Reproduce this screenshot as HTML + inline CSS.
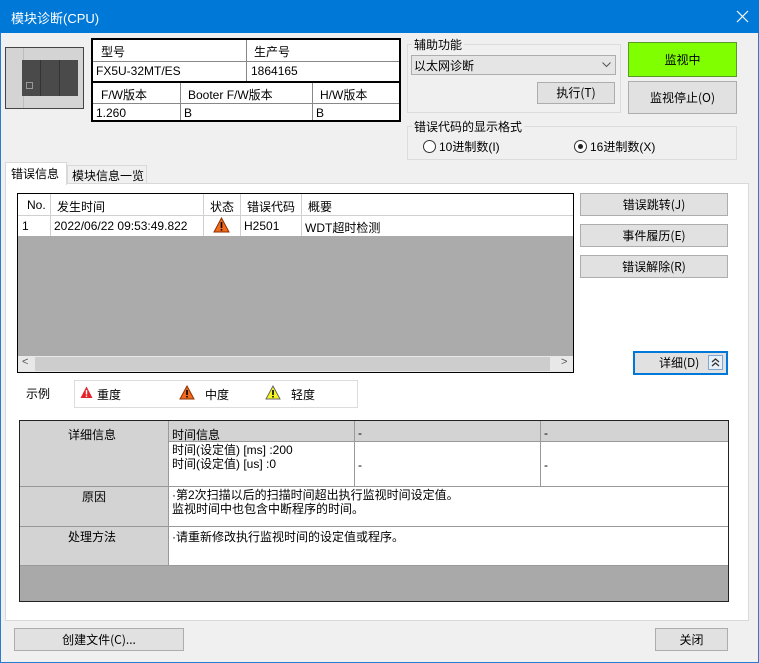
<!DOCTYPE html>
<html><head><meta charset="utf-8"><style>
*{box-sizing:border-box;margin:0;padding:0}
body{width:759px;height:663px;background:#f0f0f0;font-family:"Liberation Sans","Noto Sans CJK SC",sans-serif;font-size:12px;color:#000;position:relative;overflow:hidden}
.a{position:absolute}
.btn{position:absolute;background:#e1e1e1;border:1px solid #adadad;text-align:center;font-family:"Noto Sans CJK SC",sans-serif;font-size:12px}
.t{position:absolute;white-space:nowrap}
.vl{position:absolute;width:1px;background:#a0a0a0}
.hl{position:absolute;height:1px;background:#a0a0a0}
</style></head><body>
<div class="a" style="left:0;top:0;width:759px;height:663px;border:1px solid #2b7bd0"></div>
<div class="a" style="left:0;top:0;width:759px;height:33px;background:#0078d7"></div>
<div class="t" style="left:11px;top:8px;color:#fff;font-size:13px">模块诊断(CPU)</div>
<svg class="a" style="left:736px;top:10px" width="13" height="13"><path d="M1 1L12 12M12 1L1 12" stroke="#fff" stroke-width="1.2"/></svg>

<!-- image -->
<div class="a" style="left:5px;top:47px;width:79px;height:62px;background:#d4d4d4;border:1px solid #444"></div>
<div class="a" style="left:23px;top:48px;width:1px;height:60px;background:#bdbdbd"></div>
<div class="a" style="left:22px;top:60px;width:56px;height:36px;background:#4a4a4a"></div>
<div class="a" style="left:40px;top:60px;width:1px;height:36px;background:#333"></div>
<div class="a" style="left:59px;top:60px;width:1px;height:36px;background:#333"></div>
<div class="a" style="left:26px;top:82px;width:7px;height:7px;border:1px solid #999"></div>

<!-- info table -->
<div class="a" style="left:91px;top:38px;width:310px;height:84px;background:#fff;border:2px solid #000"></div>
<div class="a" style="left:91px;top:81px;width:310px;height:2px;background:#000"></div>
<div class="hl" style="left:93px;top:61px;width:306px;background:#888"></div>
<div class="hl" style="left:93px;top:103px;width:306px;background:#888"></div>
<div class="vl" style="left:246px;top:40px;height:41px;background:#888"></div>
<div class="vl" style="left:180px;top:83px;height:37px;background:#888"></div>
<div class="vl" style="left:312px;top:83px;height:37px;background:#888"></div>
<div class="t" style="left:101px;top:43px">型号</div>
<div class="t" style="left:254px;top:43px">生产号</div>
<div class="t" style="left:96px;top:64px">FX5U-32MT/ES</div>
<div class="t" style="left:251px;top:64px">1864165</div>
<div class="t" style="left:101px;top:86px">F/W版本</div>
<div class="t" style="left:188px;top:86px">Booter F/W版本</div>
<div class="t" style="left:320px;top:86px">H/W版本</div>
<div class="t" style="left:96px;top:106px">1.260</div>
<div class="t" style="left:184px;top:106px">B</div>
<div class="t" style="left:316px;top:106px">B</div>

<!-- aux -->
<div class="a" style="left:407px;top:44px;width:214px;height:69px;border:1px solid #dcdcdc"></div>
<div class="t" style="left:412px;top:36px;background:#f0f0f0;padding:0 2px">辅助功能</div>
<div class="a" style="left:411px;top:55px;width:205px;height:20px;background:#e5e5e5;border:1px solid #adadad"></div>
<div class="t" style="left:414px;top:57px">以太网诊断</div>
<svg class="a" style="left:602px;top:62px" width="9" height="6"><path d="M0.5 0.5L4.5 4.5L8.5 0.5" stroke="#555" fill="none"/></svg>
<div class="btn" style="left:537px;top:82px;width:78px;height:22px;line-height:20px">执行(T)</div>
<div class="btn" style="left:628px;top:42px;width:109px;height:35px;line-height:33px;background:#80ff00;border-color:#5a9a2a">监视中</div>
<div class="btn" style="left:628px;top:81px;width:109px;height:33px;line-height:31px">监视停止(O)</div>

<div class="a" style="left:407px;top:126px;width:330px;height:34px;border:1px solid #dcdcdc"></div>
<div class="t" style="left:412px;top:118px;background:#f0f0f0;padding:0 2px">错误代码的显示格式</div>
<div class="a" style="left:423px;top:140px;width:13px;height:13px;border:1px solid #333;border-radius:50%;background:#fff"></div>
<div class="t" style="left:439px;top:138px">10进制数(I)</div>
<div class="a" style="left:574px;top:140px;width:13px;height:13px;border:1px solid #333;border-radius:50%;background:#fff"></div>
<div class="a" style="left:578px;top:144px;width:5px;height:5px;border-radius:50%;background:#222"></div>
<div class="t" style="left:590px;top:138px">16进制数(X)</div>

<!-- tabs -->
<div class="a" style="left:5px;top:183px;width:744px;height:438px;background:#fff;border:1px solid #d9d9d9"></div>
<div class="a" style="left:67px;top:165px;width:80px;height:19px;border:1px solid #d9d9d9;background:#f0f0f0"></div>
<div class="t" style="left:72px;top:167px">模块信息一览</div>
<div class="a" style="left:5px;top:162px;width:62px;height:23px;background:#fff;border:1px solid #d9d9d9;border-bottom:none"></div>
<div class="t" style="left:11px;top:165px">错误信息</div>

<!-- list -->
<div class="a" style="left:17px;top:193px;width:557px;height:180px;background:#ababab;border:1px solid #000"></div>
<div class="a" style="left:18px;top:194px;width:555px;height:42px;background:#fff"></div>
<div class="hl" style="left:18px;top:215px;width:555px;background:#d0d0d0"></div>
<div class="vl" style="left:50px;top:194px;height:42px;background:#d0d0d0"></div>
<div class="vl" style="left:203px;top:194px;height:42px;background:#d0d0d0"></div>
<div class="vl" style="left:240px;top:194px;height:42px;background:#d0d0d0"></div>
<div class="vl" style="left:301px;top:194px;height:42px;background:#d0d0d0"></div>
<div class="t" style="left:27px;top:198px">No.</div>
<div class="t" style="left:57px;top:198px">发生时间</div>
<div class="t" style="left:210px;top:198px">状态</div>
<div class="t" style="left:247px;top:198px">错误代码</div>
<div class="t" style="left:308px;top:198px">概要</div>
<div class="t" style="left:22px;top:219px">1</div>
<div class="t" style="left:54px;top:219px">2022/06/22 09:53:49.822</div>
<svg class="a" style="left:213px;top:217px" width="17" height="16"><path d="M8.5 1L16 15H1Z" fill="#f26b1d" stroke="#8a3000"/><rect x="7.7" y="5" width="1.6" height="6" fill="#000"/><rect x="7.7" y="12" width="1.6" height="1.6" fill="#000"/></svg>
<div class="t" style="left:244px;top:219px">H2501</div>
<div class="t" style="left:305px;top:219px">WDT超时检测</div>
<div class="a" style="left:18px;top:356px;width:555px;height:16px;background:#e8e8e8"></div>
<div class="a" style="left:35px;top:357px;width:515px;height:14px;background:#cdcdcd"></div>
<div class="t" style="left:22px;top:356px;font-size:11px;color:#555">&lt;</div>
<div class="t" style="left:561px;top:356px;font-size:11px;color:#555">&gt;</div>

<div class="btn" style="left:580px;top:193px;width:148px;height:23px;line-height:21px">错误跳转(J)</div>
<div class="btn" style="left:580px;top:224px;width:148px;height:23px;line-height:21px">事件履历(E)</div>
<div class="btn" style="left:580px;top:255px;width:148px;height:23px;line-height:21px">错误解除(R)</div>
<div class="btn" style="left:633px;top:351px;width:95px;height:24px;line-height:20px;border:2px solid #0078d7;text-align:left;padding-left:24px">详细(D)</div>
<div class="a" style="left:708px;top:355px;width:15px;height:15px;border:1px solid #7aa7d6;background:#e8f0f8"></div>
<svg class="a" style="left:710px;top:357px" width="11" height="11"><path d="M2 5L5.5 2L9 5M2 9L5.5 6L9 9" stroke="#333" fill="none" stroke-width="1.3"/></svg>

<div class="t" style="left:26px;top:385px">示例</div>
<div class="a" style="left:74px;top:380px;width:284px;height:28px;border:1px solid #dcdcdc"></div>
<svg class="a" style="left:80px;top:386px" width="13" height="13"><path d="M6.5 0.5L12.5 12H0.5Z" fill="#e3222a"/><rect x="5.8" y="4" width="1.4" height="4.5" fill="#fff"/><rect x="5.8" y="9.5" width="1.4" height="1.4" fill="#fff"/></svg>
<div class="t" style="left:97px;top:386px">重度</div>
<svg class="a" style="left:179px;top:385px" width="16" height="15"><path d="M8 1L15 14H1Z" fill="#f26b1d" stroke="#8a3000"/><rect x="7.2" y="5" width="1.6" height="5" fill="#000"/><rect x="7.2" y="11" width="1.6" height="1.5" fill="#000"/></svg>
<div class="t" style="left:205px;top:386px">中度</div>
<svg class="a" style="left:265px;top:385px" width="16" height="15"><path d="M8 1L15 14H1Z" fill="#f5f520" stroke="#666"/><rect x="7.2" y="5" width="1.6" height="5" fill="#000"/><rect x="7.2" y="11" width="1.6" height="1.5" fill="#000"/></svg>
<div class="t" style="left:291px;top:386px">轻度</div>

<!-- detail -->
<div class="a" style="left:19px;top:420px;width:710px;height:182px;background:#a9a9a9;border:1px solid #222"></div>
<div class="a" style="left:20px;top:421px;width:148px;height:145px;background:#d3d3d3"></div>
<div class="a" style="left:169px;top:421px;width:559px;height:20px;background:#d3d3d3"></div>
<div class="a" style="left:169px;top:442px;width:559px;height:124px;background:#fff"></div>
<div class="hl" style="left:169px;top:441px;width:559px;background:#999"></div>
<div class="hl" style="left:20px;top:486px;width:708px;background:#999"></div>
<div class="hl" style="left:20px;top:526px;width:708px;background:#999"></div>
<div class="hl" style="left:20px;top:565px;width:708px;background:#999"></div>
<div class="vl" style="left:168px;top:421px;height:145px;background:#999"></div>
<div class="vl" style="left:354px;top:421px;height:65px;background:#999"></div>
<div class="vl" style="left:540px;top:421px;height:65px;background:#999"></div>
<div class="t" style="left:68px;top:426px">详细信息</div>
<div class="t" style="left:172px;top:426px">时间信息</div>
<div class="t" style="left:358px;top:426px">-</div>
<div class="t" style="left:544px;top:426px">-</div>
<div class="t" style="left:172px;top:443px;line-height:14px">时间(设定值) [ms] :200<br>时间(设定值) [us] :0</div>
<div class="t" style="left:358px;top:458px">-</div>
<div class="t" style="left:544px;top:458px">-</div>
<div class="t" style="left:82px;top:488px">原因</div>
<div class="t" style="left:172px;top:488px;line-height:14px">·第2次扫描以后的扫描时间超出执行监视时间设定值。<br>监视时间中也包含中断程序的时间。</div>
<div class="t" style="left:68px;top:528px">处理方法</div>
<div class="t" style="left:172px;top:528px">·请重新修改执行监视时间的设定值或程序。</div>

<div class="btn" style="left:14px;top:628px;width:170px;height:23px;line-height:21px">创建文件(C)...</div>
<div class="btn" style="left:655px;top:628px;width:73px;height:23px;line-height:21px">关闭</div>
</body></html>
